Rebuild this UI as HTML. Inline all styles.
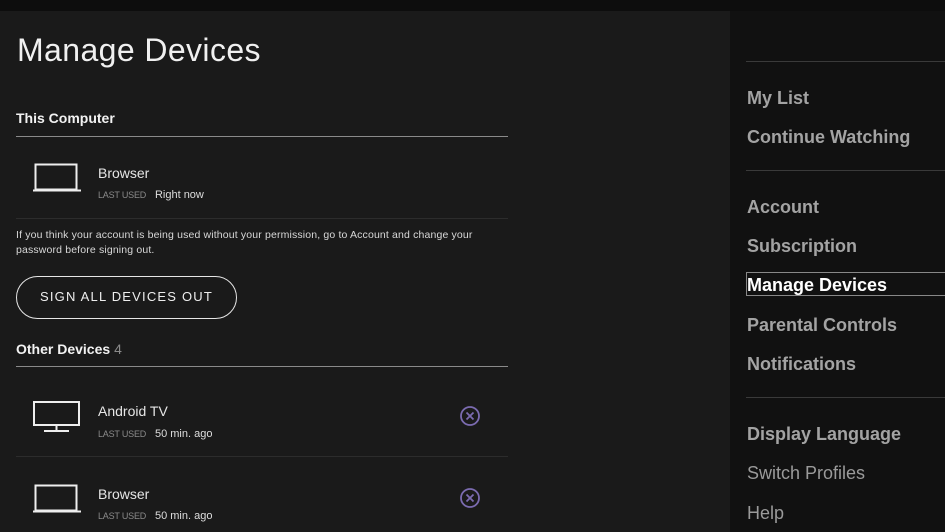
<!DOCTYPE html>
<html><head><meta charset="utf-8"><style>
*{margin:0;padding:0;box-sizing:border-box}
body{width:945px;height:532px;overflow:hidden;background:#111111;font-family:"Liberation Sans",sans-serif;position:relative;color:#fff}
.top{position:absolute;left:0;top:0;width:945px;height:11px;background:#0d0d0d}
.main{position:absolute;left:0;top:11px;width:730px;height:521px;background:#1a1a1a}
.a{position:absolute;white-space:nowrap}
.line{position:absolute;height:1px}
.nav{position:absolute;left:747px;font-size:18px;font-weight:bold;color:#a3a3a3;line-height:22px}
.sm{font-size:9px;color:#8a8a8a;letter-spacing:-0.2px}
.v{font-size:11px;color:#ddd}
</style></head><body>
<div class="top"></div>
<div class="main"></div>
<div class="a" style="left:17px;top:32px;font-size:32px;color:#f0f0f0;letter-spacing:0.4px">Manage Devices</div>
<div class="a" style="left:16px;top:110px;font-size:14px;font-weight:bold;color:#f2f2f2">This Computer</div>
<div class="line" style="left:16px;top:136px;width:492px;background:#8a8a8a"></div>
<svg class="a" style="left:32px;top:163px" width="50" height="30" viewBox="0 0 50 30"><rect x="3.5" y="1.5" width="41" height="25" fill="none" stroke="#eee" stroke-width="2"/><line x1="1" y1="27.5" x2="49" y2="27.5" stroke="#eee" stroke-width="2"/></svg>
<div class="a" style="left:98px;top:165px;font-size:14px;color:#e6e6e6">Browser</div>
<div class="a" style="left:98px;top:185px"><span class="sm">LAST USED</span>&nbsp; <span class="v">Right now</span></div>
<div class="line" style="left:16px;top:218px;width:492px;background:#2c2c2c"></div>
<div class="a" style="left:16px;top:228px;font-size:10.5px;color:#d8d8d8;line-height:15px;letter-spacing:0.15px">If you think your account is being used without your permission, go to Account and change your<br>password before signing out.</div>
<div class="a" style="left:16px;top:276px;width:221px;height:43px;border:1.5px solid #e6e6e6;border-radius:22px;font-size:13px;letter-spacing:1.2px;color:#eee;text-align:center;line-height:40px">SIGN ALL DEVICES OUT</div>
<div class="a" style="left:16px;top:341px;font-size:14px;font-weight:bold;color:#f2f2f2">Other Devices <span style="color:#8a8a8a;font-weight:normal">4</span></div>
<div class="line" style="left:16px;top:366px;width:492px;background:#8a8a8a"></div>
<svg class="a" style="left:32px;top:400px" width="50" height="33" viewBox="0 0 50 33"><rect x="2" y="2" width="45" height="23" fill="none" stroke="#eee" stroke-width="2"/><line x1="24.5" y1="25" x2="24.5" y2="30" stroke="#eee" stroke-width="2"/><line x1="12" y1="31" x2="37" y2="31" stroke="#eee" stroke-width="2"/></svg>
<div class="a" style="left:98px;top:403px;font-size:14px;color:#e6e6e6">Android TV</div>
<div class="a" style="left:98px;top:424px"><span class="sm">LAST USED</span>&nbsp; <span class="v">50 min. ago</span></div>
<svg class="a" style="left:459px;top:405px" width="22" height="22" viewBox="0 0 22 22"><circle cx="11" cy="11" r="9" fill="none" stroke="#7b6bb0" stroke-width="1.8"/><path d="M7.5 7.5L14.5 14.5M14.5 7.5L7.5 14.5" stroke="#7b6bb0" stroke-width="1.8"/></svg>
<div class="line" style="left:16px;top:456px;width:492px;background:#2c2c2c"></div>
<svg class="a" style="left:32px;top:484px" width="50" height="30" viewBox="0 0 50 30"><rect x="3.5" y="1.5" width="41" height="25" fill="none" stroke="#eee" stroke-width="2"/><line x1="1" y1="27.5" x2="49" y2="27.5" stroke="#eee" stroke-width="2"/></svg>
<div class="a" style="left:98px;top:486px;font-size:14px;color:#e6e6e6">Browser</div>
<div class="a" style="left:98px;top:506px"><span class="sm">LAST USED</span>&nbsp; <span class="v">50 min. ago</span></div>
<svg class="a" style="left:459px;top:487px" width="22" height="22" viewBox="0 0 22 22"><circle cx="11" cy="11" r="9" fill="none" stroke="#7b6bb0" stroke-width="1.8"/><path d="M7.5 7.5L14.5 14.5M14.5 7.5L7.5 14.5" stroke="#7b6bb0" stroke-width="1.8"/></svg>

<div class="line" style="left:746px;top:61px;width:199px;background:#3a3a3a"></div>
<div class="nav" style="top:87px">My List</div>
<div class="nav" style="top:126px">Continue Watching</div>
<div class="line" style="left:746px;top:170px;width:199px;background:#3a3a3a"></div>
<div class="nav" style="top:196px">Account</div>
<div class="nav" style="top:235px">Subscription</div>
<div class="a" style="left:746px;top:272px;width:200px;height:24px;border:1px solid #888"></div>
<div class="nav" style="top:274px;color:#fff">Manage Devices</div>
<div class="nav" style="top:314px">Parental Controls</div>
<div class="nav" style="top:353px">Notifications</div>
<div class="line" style="left:746px;top:397px;width:199px;background:#3a3a3a"></div>
<div class="nav" style="top:423px">Display Language</div>
<div class="nav" style="top:462px;font-weight:normal;color:#9a9a9a">Switch Profiles</div>
<div class="nav" style="top:502px;font-weight:normal;color:#9a9a9a">Help</div>
</body></html>
